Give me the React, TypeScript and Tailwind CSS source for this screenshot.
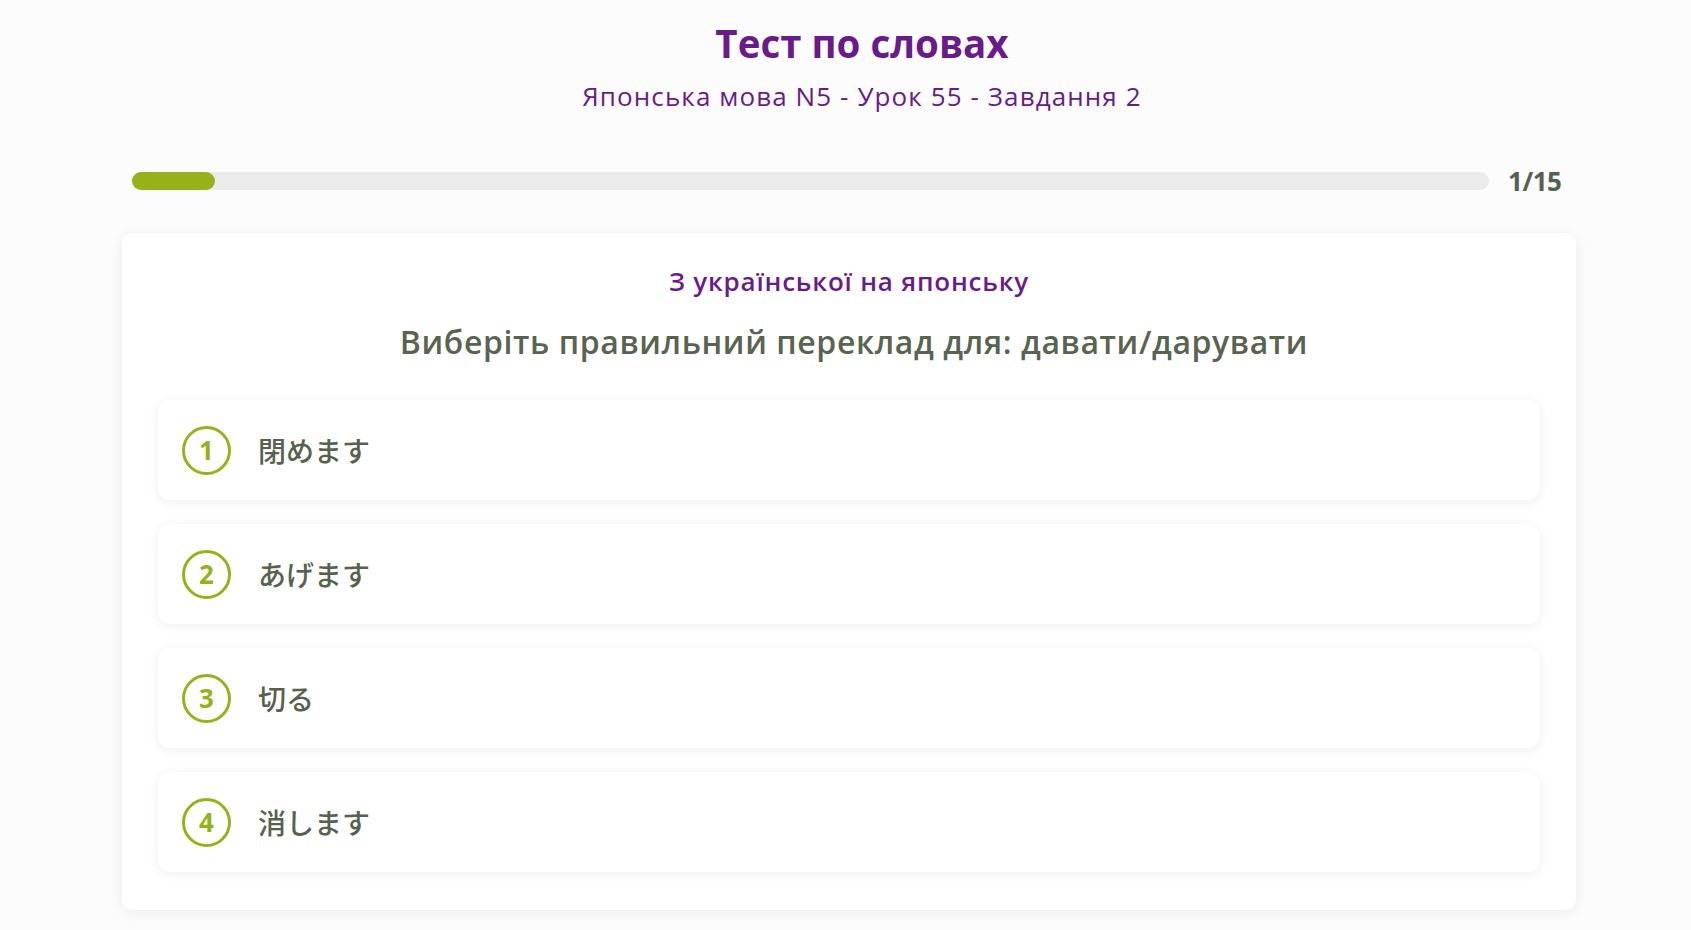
import React from "react";

const options = ["閉めます", "あげます", "切る", "消します"];

export default function App() {
  const current = 1;
  const total = 15;
  return (
    <div className="min-h-screen w-full bg-[#fcfcfc] pb-10 font-['Open_Sans','Noto_Sans',sans-serif]">
      <div className="ml-[122px] w-[1480px] flex flex-col items-center pt-[20px]">
        <h1 className="text-[38.5px] leading-[46px] font-bold text-[#6a1b8a]">Тест по словах</h1>
        <p className="mt-[14px] text-[26px] leading-[32px] tracking-[1.1px] text-[#6a1b8a]">Японська мова N5 - Урок 55 - Завдання 2</p>
      </div>

      <div className="mt-[52px] ml-[132px] flex items-center gap-[19px]">
        <div className="h-[18px] w-[1357px] rounded-full bg-[#ebebeb]">
          <div className="h-full w-[6.1%] rounded-full bg-[#97b11b]" />
        </div>
        <span className="text-[26px] leading-[34px] font-bold tracking-[-0.5px] text-[#556150]">
          {current}/{total}
        </span>
      </div>

      <div className="mt-[35px] ml-[122px] w-[1454px] rounded-[10px] bg-white px-[36px] pt-[33px] pb-[38px] shadow-[0_2px_14px_rgba(0,0,0,0.07)]">
        <div className="flex flex-col items-center">
          <p className="text-[26px] leading-[30px] tracking-[0.8px] font-semibold text-[#6a1b8a]">З української на японську</p>
          <p className="mt-[27px] pl-[10px] text-[32px] leading-[38px] tracking-[0.6px] font-semibold text-[#58644f]">
            Виберіть правильний переклад для: давати/дарувати
          </p>
        </div>
        <div className="mt-[39px] flex flex-col gap-[24px]">
          {options.map((o, i) => (
            <div
              key={i}
              className="flex h-[100px] items-center gap-[27px] rounded-xl bg-white pl-[24px] shadow-[0_2px_12px_rgba(0,0,0,0.07)]"
            >
              <div className="flex h-[49px] w-[49px] items-center justify-center rounded-full border-[3px] border-[#97b11b] text-[26px] font-bold text-[#97b11b]">
                {i + 1}
              </div>
              <span className="text-[28px] font-medium text-[#56624d] font-['Noto_Sans_CJK_JP',sans-serif]">{o}</span>
            </div>
          ))}
        </div>
      </div>
    </div>
  );
}
